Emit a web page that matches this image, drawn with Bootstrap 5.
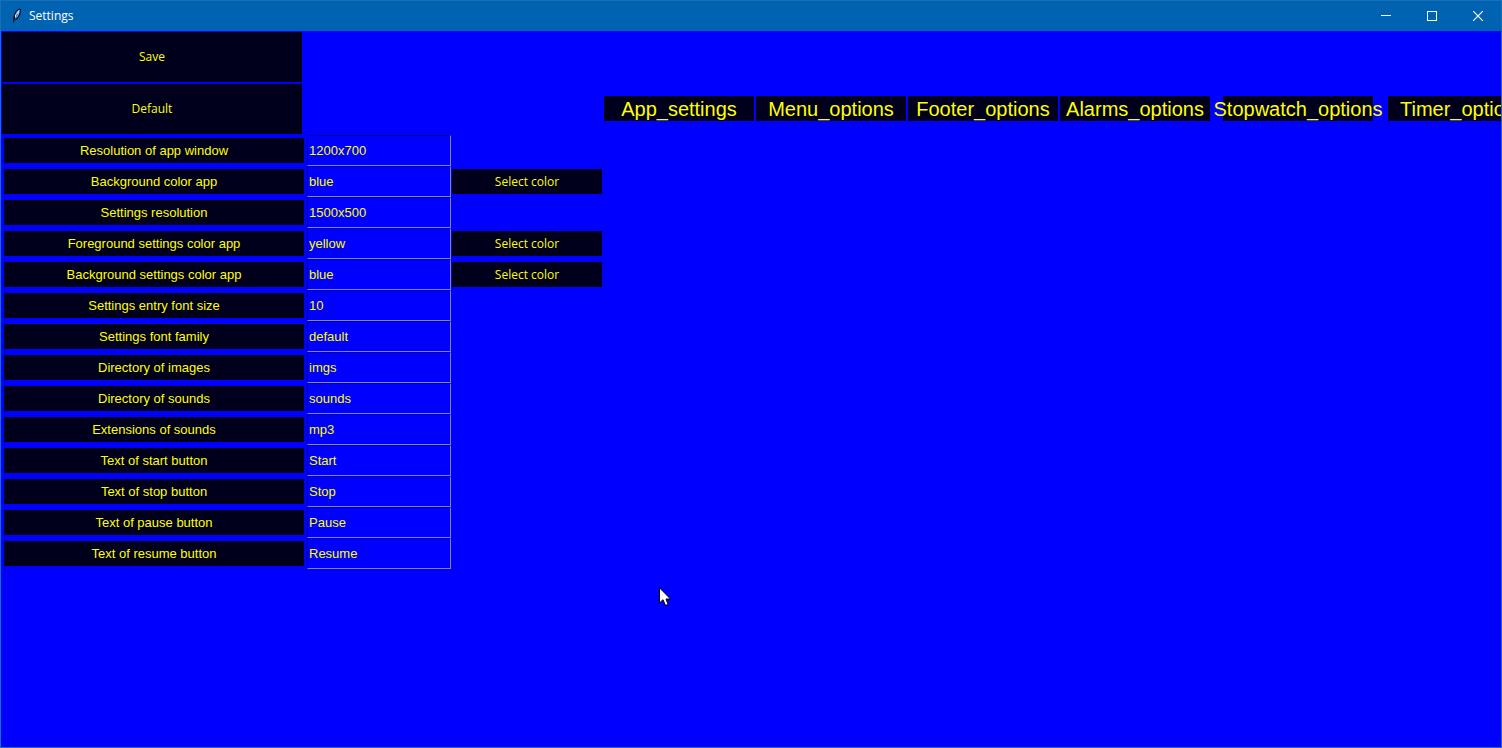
<!DOCTYPE html>
<html lang="en">
<head>
<meta charset="utf-8">
<meta name="viewport" content="width=device-width, initial-scale=1">
<title>Settings</title>
<link href="https://cdn.jsdelivr.net/npm/bootstrap@5.3.0/dist/css/bootstrap.min.css" rel="stylesheet">
<style>
body { font-family: "Liberation Sans", Arial, sans-serif; background: #00f; }
.app-window { min-height: 100vh; border: 1px solid #1a6fb4; background: #00f; }
.titlebar { height: 30px; background: #0063b1; color: #fff; font: 12px/16px "Open Sans", sans-serif; }
.titlebar button { width: 46px; height: 28px; }
.ui-text { font: 12px/16px "Open Sans", sans-serif; }
.dark-btn { background: #00001c; color: #ff0; border: 0; border-radius: 0; padding: 0; }
.dark-btn:hover, .dark-btn:focus { background: #000040; color: #ff0; }
.top-area { padding: 1px 0 0 1px; }
.actions { width: 300px; gap: 2px; }
.actions .dark-btn { height: 50px; }
.tabs { gap: 2px; margin-left: 302px; padding-bottom: 13px; }
.tab-btn { width: 150px; height: 25px; font-size: 20px; line-height: 27px; flex: none; white-space: nowrap; display: flex; justify-content: center; }
.tab-wide { margin-left: 11px; margin-right: 13px; }
.settings { padding: 1px 0 0 3px; }
.setting { height: 31px; font-size: 13px; }
.setting label { width: 300px; height: 25px; line-height: 25px; background: #00001c; color: #ff0; margin-right: 3px; text-align: center; }
.setting input { width: 144px; height: 31px; font-size: 13px; line-height: 16px; color: #ff0; background: #00f; border: 1px solid #8080ff; border-top-color: #00009c; border-left-color: #00009c; border-radius: 0; padding: 0 1px; margin-right: 1px; }
.setting button { width: 150px; height: 25px; }
.pointer { left: 658px; top: 586px; }
</style>
</head>
<body>
<div class="app-window position-relative d-flex flex-column overflow-hidden">
  <header class="titlebar d-flex align-items-center ps-2">
    <svg width="16" height="20" viewBox="0 0 16 20" aria-hidden="true">
      <path d="M4 17.500 4.500 10 6.500 5.500 10 2.500 12 3 11.500 8 9 12.500 6 14.500Z" fill="#071120"/>
      <path d="M6 13 6 9 8 5.500 10.500 3.500 10.500 7 8.500 11Z" fill="#8dbcf0"/>
      <path d="M5 17 7 11 10 5" fill="none" stroke="#33507c" stroke-width=".700"/>
      <path d="M8.500 8 10 4.500M6.500 11V9" fill="none" stroke="#e4f1ff"/>
    </svg>
    <span class="ms-1">Settings</span>
    <div class="ms-auto d-flex">
      <button class="btn p-0 border-0 rounded-0 d-flex align-items-center justify-content-center" type="button" aria-label="Minimize"><svg width="10" height="10" shape-rendering="crispEdges"><path d="M0 4.500H10" stroke="#fff"/></svg></button>
      <button class="btn p-0 border-0 rounded-0 d-flex align-items-center justify-content-center" type="button" aria-label="Maximize"><svg width="10" height="10" shape-rendering="crispEdges"><path d="M.5.5H9.500V9.500H.5Z" fill="none" stroke="#fff"/></svg></button>
      <button class="btn p-0 border-0 rounded-0 d-flex align-items-center justify-content-center" type="button" aria-label="Close"><svg width="10" height="10"><path d="M0 0 10 10M10 0 0 10" stroke="#fff" stroke-width="1.200"/></svg></button>
    </div>
  </header>
  <div class="top-area d-flex align-items-end">
    <div class="actions d-flex flex-column flex-shrink-0">
      <button class="btn dark-btn ui-text" type="submit" form="settings">Save</button>
      <button class="btn dark-btn ui-text" type="reset" form="settings">Default</button>
    </div>
    <nav class="tabs d-flex" aria-label="Settings sections">
      <button class="dark-btn tab-btn" type="button">App_settings</button>
      <button class="dark-btn tab-btn" type="button">Menu_options</button>
      <button class="dark-btn tab-btn" type="button">Footer_options</button>
      <button class="dark-btn tab-btn" type="button">Alarms_options</button>
      <button class="dark-btn tab-btn tab-wide" type="button">Stopwatch_options</button>
      <button class="dark-btn tab-btn" type="button">Timer_options</button>
    </nav>
  </div>
  <form class="settings" id="settings">
    <div class="setting d-flex align-items-center"><label for="res">Resolution of app window</label><input id="res" type="text" value="1200x700"></div>
    <div class="setting d-flex align-items-center"><label for="bg">Background color app</label><input id="bg" type="text" value="blue"><button class="btn dark-btn ui-text" type="button">Select color</button></div>
    <div class="setting d-flex align-items-center"><label for="sres">Settings resolution</label><input id="sres" type="text" value="1500x500"></div>
    <div class="setting d-flex align-items-center"><label for="sfg">Foreground settings color app</label><input id="sfg" type="text" value="yellow"><button class="btn dark-btn ui-text" type="button">Select color</button></div>
    <div class="setting d-flex align-items-center"><label for="sbg">Background settings color app</label><input id="sbg" type="text" value="blue"><button class="btn dark-btn ui-text" type="button">Select color</button></div>
    <div class="setting d-flex align-items-center"><label for="fsize">Settings entry font size</label><input id="fsize" type="text" value="10"></div>
    <div class="setting d-flex align-items-center"><label for="ffam">Settings font family</label><input id="ffam" type="text" value="default"></div>
    <div class="setting d-flex align-items-center"><label for="imgs">Directory of images</label><input id="imgs" type="text" value="imgs"></div>
    <div class="setting d-flex align-items-center"><label for="snds">Directory of sounds</label><input id="snds" type="text" value="sounds"></div>
    <div class="setting d-flex align-items-center"><label for="ext">Extensions of sounds</label><input id="ext" type="text" value="mp3"></div>
    <div class="setting d-flex align-items-center"><label for="start">Text of start button</label><input id="start" type="text" value="Start"></div>
    <div class="setting d-flex align-items-center"><label for="stop">Text of stop button</label><input id="stop" type="text" value="Stop"></div>
    <div class="setting d-flex align-items-center"><label for="pause">Text of pause button</label><input id="pause" type="text" value="Pause"></div>
    <div class="setting d-flex align-items-center"><label for="resume">Text of resume button</label><input id="resume" type="text" value="Resume"></div>
  </form>
  <svg class="pointer position-absolute" width="12" height="19" viewBox="0 0 12 19" aria-hidden="true"><path d="M.5.800V16L4 12.700 6.200 18H8.500L9 17 7 12H11.500Z" fill="#fff" stroke="#000"/></svg>
</div>
<script src="https://cdn.jsdelivr.net/npm/bootstrap@5.3.0/dist/js/bootstrap.bundle.min.js"></script>
</body>
</html>
